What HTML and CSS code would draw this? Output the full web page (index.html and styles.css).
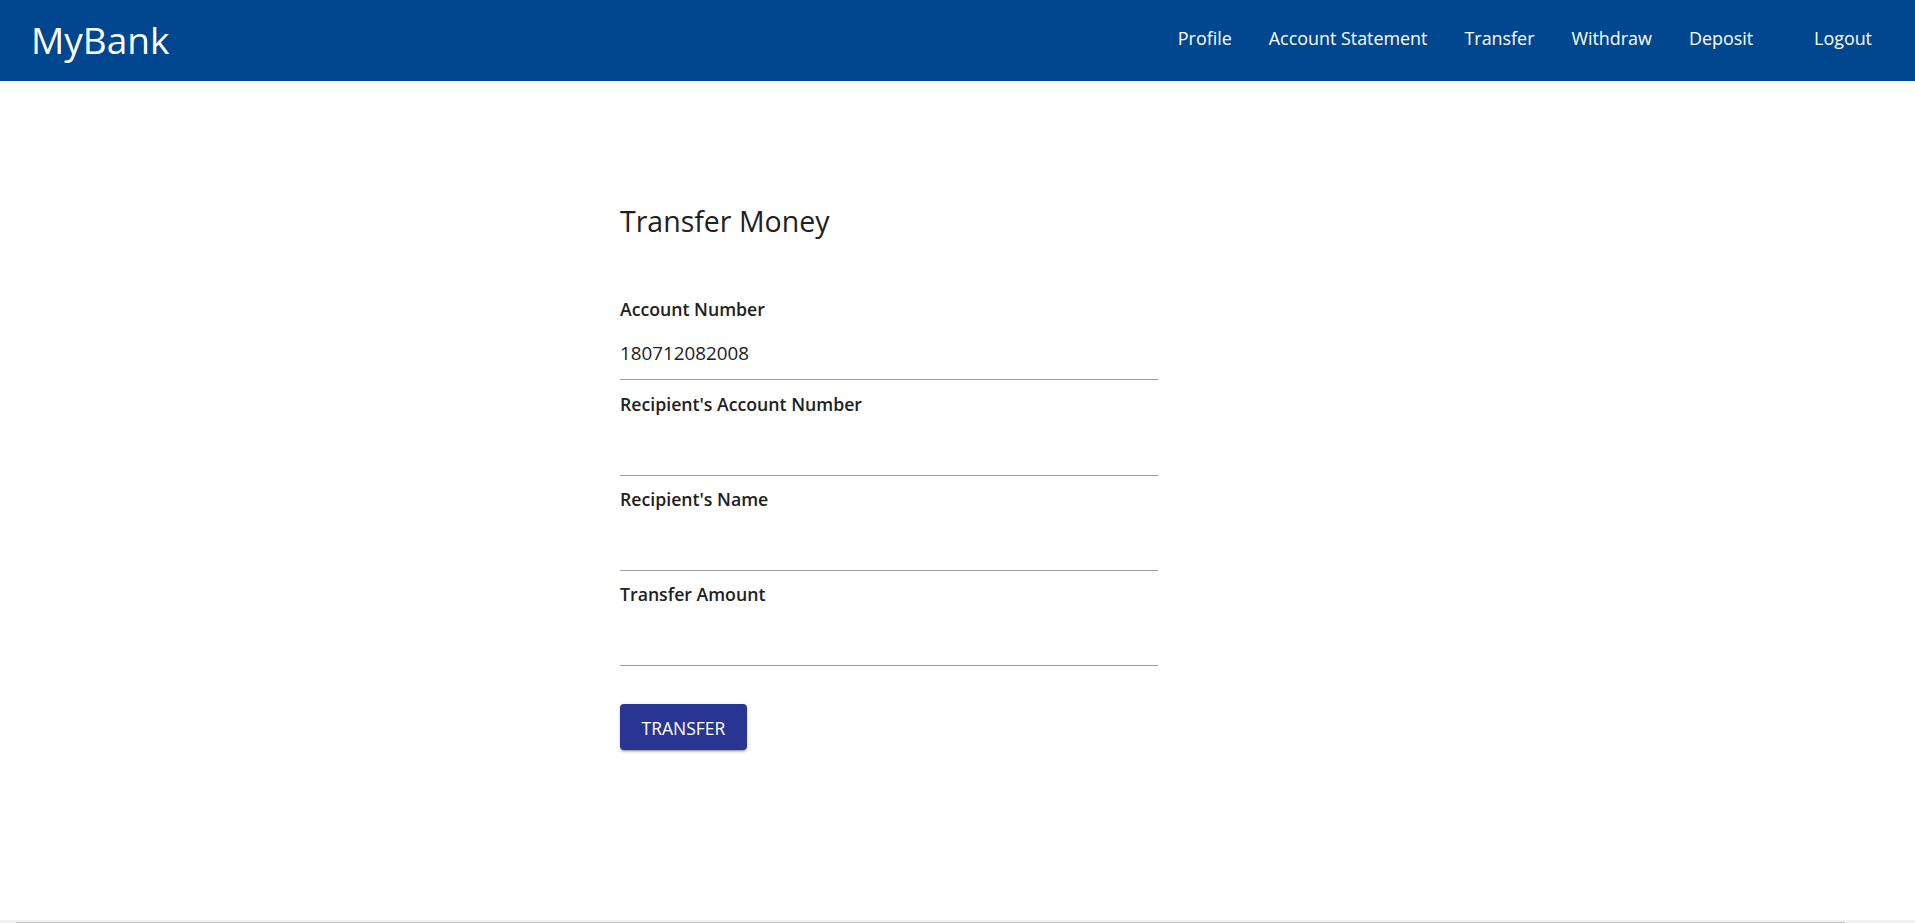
FILE: index.html
```html
<!DOCTYPE html>
<html lang="en">
<head>
<meta charset="utf-8">
<title>MyBank - Transfer</title>
<link rel="stylesheet" href="styles.css">
</head>
<body>
<header class="topbar">
  <a class="brand" href="#">MyBank</a>
  <nav class="nav">
    <a class="nav-link" href="#">Profile</a>
    <a class="nav-link" href="#">Account Statement</a>
    <a class="nav-link" href="#">Transfer</a>
    <a class="nav-link" href="#">Withdraw</a>
    <a class="nav-link" href="#">Deposit</a>
    <a class="nav-link nav-logout" href="#">Logout</a>
  </nav>
</header>
<main class="page">
  <form class="transfer-form">
    <h1 class="title">Transfer Money</h1>
    <div class="field">
      <label class="field-label">Account Number</label>
      <div class="field-input">180712082008</div>
    </div>
    <div class="field">
      <label class="field-label">Recipient's Account Number</label>
      <div class="field-input"></div>
    </div>
    <div class="field">
      <label class="field-label">Recipient's Name</label>
      <div class="field-input"></div>
    </div>
    <div class="field">
      <label class="field-label">Transfer Amount</label>
      <div class="field-input"></div>
    </div>
    <button type="button" class="btn-transfer">TRANSFER</button>
  </form>
</main>
<div class="hscroll"><div class="hscroll-thumb"></div></div>
</body>
</html>
```
FILE: styles.css
```css
html, body {
  margin: 0;
  padding: 0;
  background: #ffffff;
}
body {
  font-family: "Open Sans", "Noto Sans", sans-serif;
  color: #212121;
  overflow: hidden;
  height: 923px;
}
.topbar {
  height: 81px;
  background: #00478f;
  display: flex;
  align-items: center;
  justify-content: space-between;
  padding: 0 43px 0 31px;
  box-sizing: border-box;
}
.brand {
  color: #ffffff;
  text-decoration: none;
  font-size: 37px;
  line-height: 44px;
  font-weight: 400;
  margin-top: -2px;
}
.nav {
  display: flex;
  align-items: center;
}
.nav-link {
  color: #ffffff;
  text-decoration: none;
  font-size: 17.9px;
  line-height: 24px;
  margin-left: 37px;
  margin-top: -6px;
}
.nav-link:first-child {
  margin-left: 0;
}
.nav-logout {
  margin-left: 61px;
}
.page {
  padding: 123px 0 0 620px;
}
.transfer-form {
  width: 538px;
  display: flex;
  flex-direction: column;
  align-items: flex-start;
}
.title {
  margin: 0 0 47px 0;
  font-size: 28.5px;
  line-height: 34px;
  font-weight: 400;
  color: #212121;
}
.field {
  width: 100%;
  display: flex;
  flex-direction: column;
}
.field-label {
  margin-top: 11.5px;
  font-size: 17.7px;
  line-height: 24px;
  font-weight: 600;
  color: #212121;
}
.field-input {
  padding: 19px 0 13.8px 0;
  height: 26px;
  font-size: 18.8px;
  line-height: 26px;
  border-bottom: 1px solid #9e9e9e;
  color: #212121;
}
.btn-transfer {
  margin-top: 38px;
  height: 46px;
  padding: 2px 21.5px 0 21.5px;
  background: #283593;
  color: #ffffff;
  border: none;
  border-radius: 4px;
  font-family: "Open Sans", "Noto Sans", sans-serif;
  font-size: 17.5px;
  line-height: 44px;
  letter-spacing: 0;
  box-shadow: 0 3px 1px -2px rgba(0,0,0,.2), 0 2px 2px 0 rgba(0,0,0,.14), 0 1px 5px 0 rgba(0,0,0,.12);
  cursor: pointer;
}
.hscroll {
  position: fixed;
  left: 0;
  right: 0;
  bottom: 0;
  height: 3px;
  background: #f1f1f1;
}
.hscroll-thumb {
  margin: 2px 70px 0 16px;
  height: 1px;
  background: #c1c1c1;
}
```
